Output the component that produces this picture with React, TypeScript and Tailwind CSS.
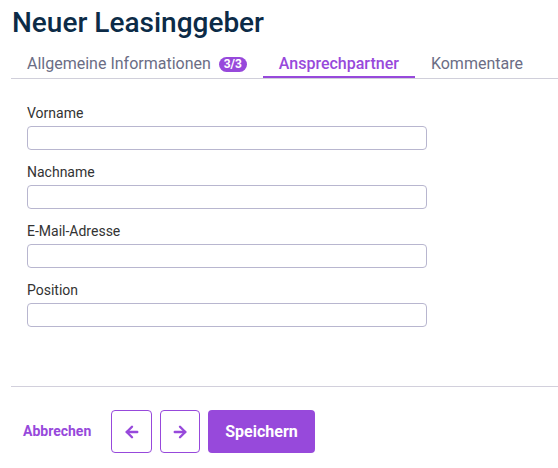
import React from "react";
import { ArrowLeft, ArrowRight } from "lucide-react";

const fields = ["Vorname", "Nachname", "E-Mail-Adresse", "Position"];

export default function App() {
  return (
    <div
      className="w-[558px] h-[468px] bg-white overflow-hidden"
      style={{ fontFamily: "Roboto, 'Liberation Sans', sans-serif" }}
    >
      <h1 className="ml-3 mt-[6px] text-[28px] leading-[34px] font-medium text-[#0c2b47]">
        Neuer Leasinggeber
      </h1>
      <div className="ml-[11px] mt-3 flex border-b border-[#d0cfda]">
        <div className="px-4 flex items-center gap-2 text-[16px] leading-6 text-[#6b6d85] border-b-2 border-transparent">
          <span>Allgemeine Informationen</span>
          <span className="h-[15px] w-[28px] text-center rounded-full bg-[#9749db] text-white text-[12px] leading-[15px] font-bold">
            3/3
          </span>
        </div>
        <div className="px-4 text-[16px] leading-6 font-medium text-[#9749db] border-b-2 border-[#9749db]">
          Ansprechpartner
        </div>
        <div className="px-4 text-[16px] leading-6 text-[#6b6d85] border-b-2 border-transparent">
          Kommentare
        </div>
      </div>
      <div className="ml-[11px] px-4 pt-6 flex flex-col gap-3">
        {fields.map((f) => (
          <div key={f} className="flex flex-col gap-[3px]">
            <label className="text-[14px] leading-5 text-[#333333]">{f}</label>
            <input
              type="text"
              className="w-[400px] h-6 rounded-[4px] border border-[#b8b6cf] bg-white outline-none"
            />
          </div>
        ))}
      </div>
      <div className="ml-[11px] mt-[59px] border-t border-[#d2d0dc] pt-[23px] flex items-center gap-2">
        <button className="px-3 text-[14px] font-bold text-[#9749db]">Abbrechen</button>
        <button className="w-[41px] h-[43px] flex items-center justify-center rounded-[4px] border border-[#9749db] text-[#9749db]">
          <ArrowLeft size={18} strokeWidth={3.2} />
        </button>
        <button className="w-10 h-[43px] flex items-center justify-center rounded-[4px] border border-[#9749db] text-[#9749db]">
          <ArrowRight size={18} strokeWidth={3.2} />
        </button>
        <button className="h-[43px] px-[17px] rounded-[4px] bg-[#9749db] text-white text-[16px] font-bold">
          Speichern
        </button>
      </div>
    </div>
  );
}
